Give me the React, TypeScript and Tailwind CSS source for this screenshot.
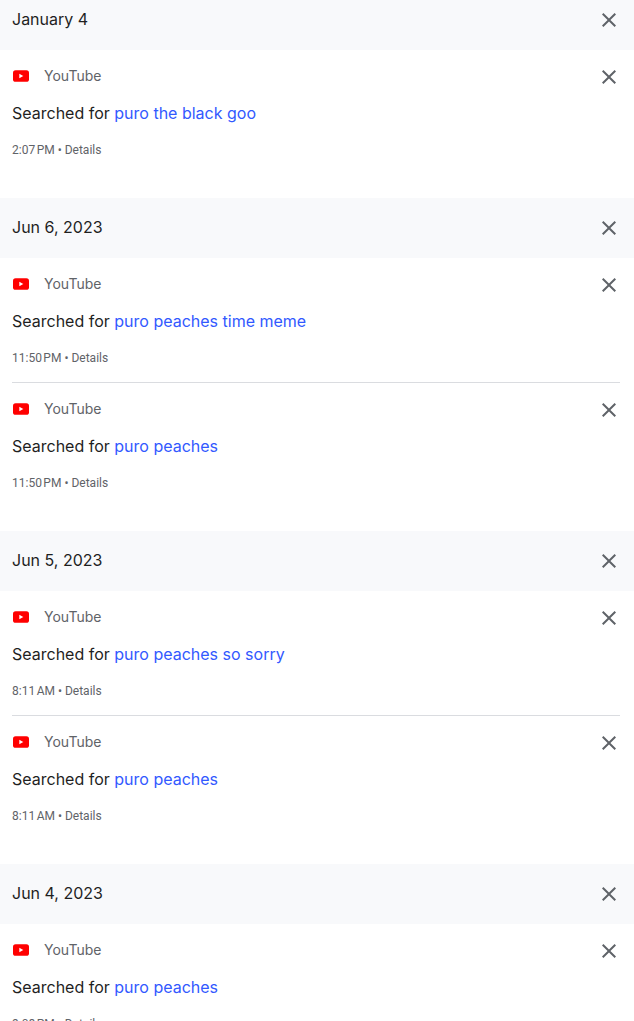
import { useState } from "react";

interface Activity {
  id: string;
  query: string;
  time: string;
}

interface Day {
  label: string;
  activities: Activity[];
}

const initialDays: Day[] = [
  {
    label: "January 4",
    activities: [{ id: "a1", query: "puro the black goo", time: "2:07\u202fPM" }],
  },
  {
    label: "Jun 6, 2023",
    activities: [
      { id: "b1", query: "puro peaches time meme", time: "11:50\u202fPM" },
      { id: "b2", query: "puro peaches", time: "11:50\u202fPM" },
    ],
  },
  {
    label: "Jun 5, 2023",
    activities: [
      { id: "c1", query: "puro peaches so sorry", time: "8:11\u202fAM" },
      { id: "c2", query: "puro peaches", time: "8:11\u202fAM" },
    ],
  },
  {
    label: "Jun 4, 2023",
    activities: [{ id: "d1", query: "puro peaches", time: "9:08\u202fPM" }],
  },
];

const YouTubeIcon = () => (
  <svg viewBox="0 0 18 20" className="h-5 w-[18px] shrink-0" aria-hidden="true">
    <rect x="1" y="4.2" width="16" height="11.6" rx="2.6" fill="#ff0000" />
    <path d="M7.3 7.8v4.4L11.3 10z" fill="#fff" />
  </svg>
);

const CloseButton = ({
  label,
  onClick,
}: {
  label: string;
  onClick: () => void;
}) => (
  <button
    type="button"
    aria-label={label}
    onClick={onClick}
    className="flex size-[22px] shrink-0 cursor-pointer items-center justify-center rounded-full text-[#5f6368] hover:bg-black/5"
  >
    <svg viewBox="0 0 14 14" className="size-3.5" fill="currentColor">
      <path d="M14 1.41 12.59 0 7 5.59 1.41 0 0 1.41 5.59 7 0 12.59 1.41 14 7 8.41 12.59 14 14 12.59 8.41 7z" />
    </svg>
  </button>
);

const ActivityItem = ({
  activity,
  onDelete,
}: {
  activity: Activity;
  onDelete: () => void;
}) => (
  <li className="flex flex-col gap-4 py-4">
    <div className="flex h-5 items-start">
      <YouTubeIcon />
      <span className="ml-3.5 flex-1 text-sm text-[#5f6368]">YouTube</span>
      <CloseButton label={`Delete ${activity.query}`} onClick={onDelete} />
    </div>
    <p className="pb-0.5 text-base/[22px] text-[#1f1f1f]">
      Searched for{" "}
      <a href="#search" className="text-[#3259ff]">
        {activity.query}
      </a>
    </p>
    <p className="font-[Roboto,sans-serif] text-xs text-[#5f6368]">
      {activity.time} • <a href="#details">Details</a>
    </p>
  </li>
);

const App = () => {
  const [days, setDays] = useState(initialDays);

  const deleteDay = (label: string) =>
    setDays(days.filter((day) => day.label !== label));

  const deleteActivity = (id: string) =>
    setDays(
      days
        .map((day) => ({
          ...day,
          activities: day.activities.filter((item) => item.id !== id),
        }))
        .filter((day) => day.activities.length > 0),
    );

  return (
    <main className="h-screen overflow-hidden bg-white font-[Inter,sans-serif]">
      <div className="-mt-2.5">
        {days.map((day) => (
          <section key={day.label} className="pb-6">
            <header className="flex h-[60px] items-center justify-between bg-[#f8f9fb] pr-3.5 pl-3">
              <h2 className="pb-0.5 text-base/[22px] text-[#1f1f1f]">
                {day.label}
              </h2>
              <CloseButton
                label={`Delete all activity from ${day.label}`}
                onClick={() => deleteDay(day.label)}
              />
            </header>
            <ul className="mr-3.5 ml-3 divide-y divide-[#dadce0]">
              {day.activities.map((activity) => (
                <ActivityItem
                  key={activity.id}
                  activity={activity}
                  onDelete={() => deleteActivity(activity.id)}
                />
              ))}
            </ul>
          </section>
        ))}
      </div>
    </main>
  );
};

export default App;
